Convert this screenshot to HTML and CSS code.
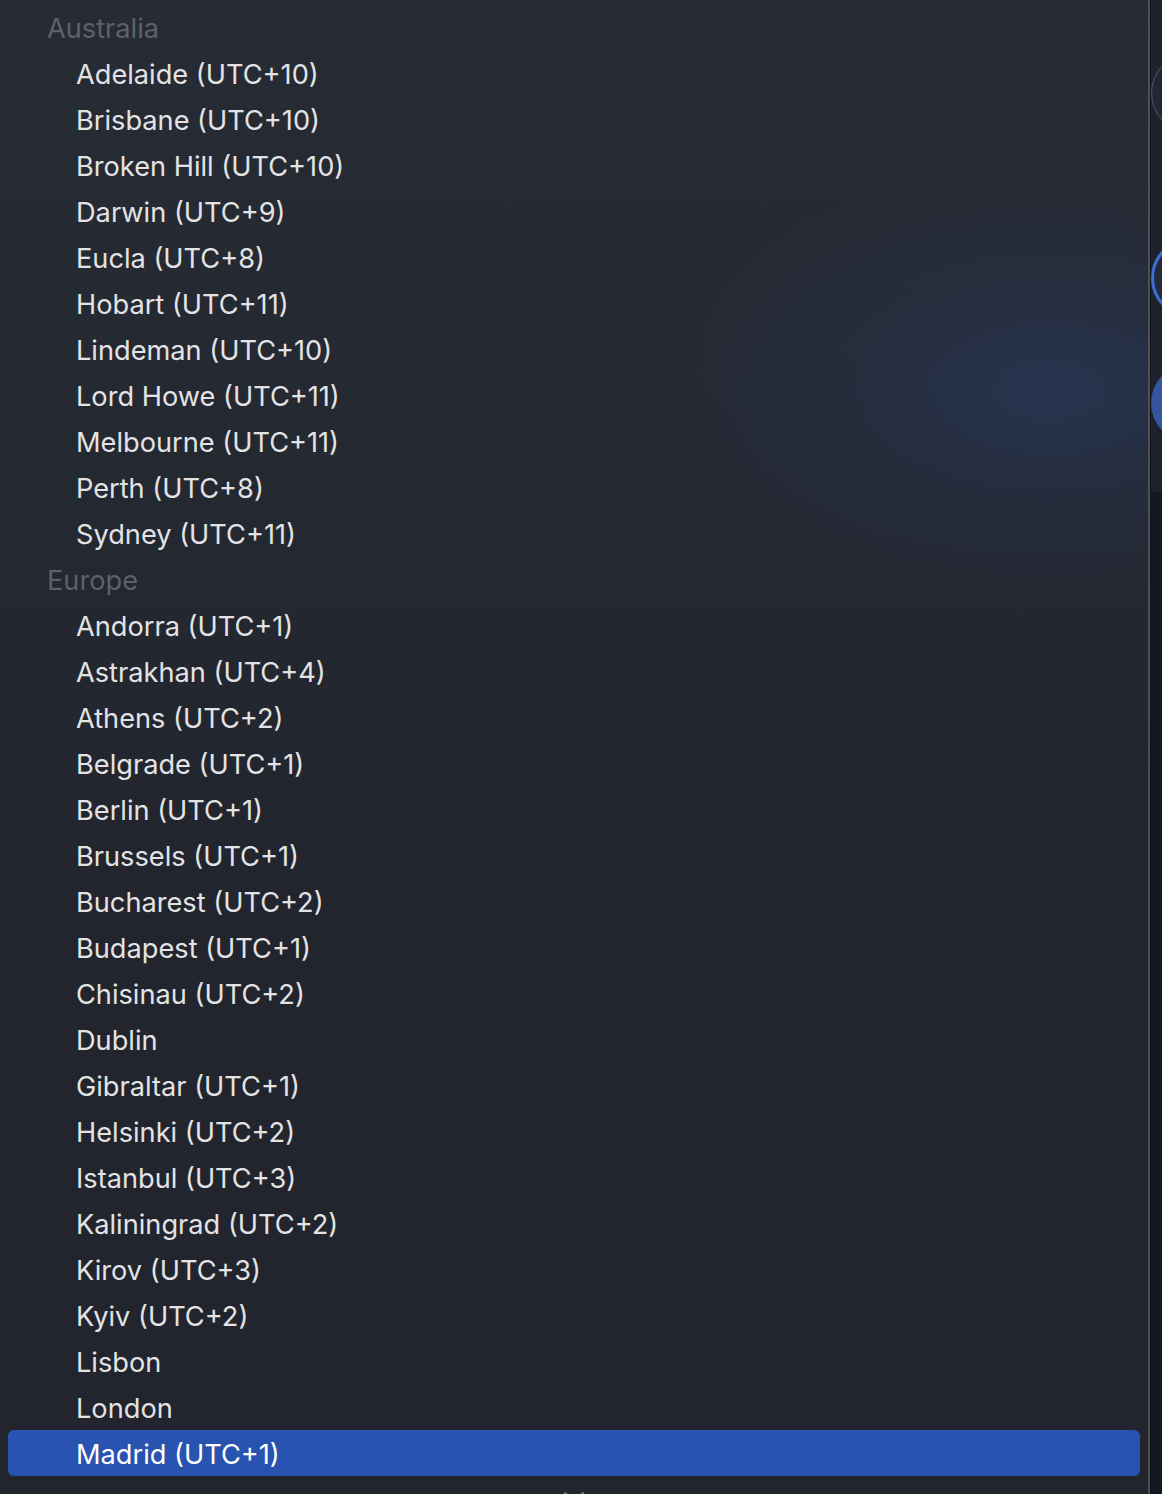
FILE: index.html
```html
<!DOCTYPE html>
<html>
<head>
<meta charset="utf-8">
<link rel="stylesheet" href="styles.css">
</head>
<body>
<div class="screen">
  <div class="menu">
    <ul class="list">
      <li class="group">Australia</li>
      <li class="item">Adelaide (UTC+10)</li>
      <li class="item">Brisbane (UTC+10)</li>
      <li class="item">Broken Hill (UTC+10)</li>
      <li class="item">Darwin (UTC+9)</li>
      <li class="item">Eucla (UTC+8)</li>
      <li class="item">Hobart (UTC+11)</li>
      <li class="item">Lindeman (UTC+10)</li>
      <li class="item">Lord Howe (UTC+11)</li>
      <li class="item">Melbourne (UTC+11)</li>
      <li class="item">Perth (UTC+8)</li>
      <li class="item">Sydney (UTC+11)</li>
      <li class="group">Europe</li>
      <li class="item">Andorra (UTC+1)</li>
      <li class="item">Astrakhan (UTC+4)</li>
      <li class="item">Athens (UTC+2)</li>
      <li class="item">Belgrade (UTC+1)</li>
      <li class="item">Berlin (UTC+1)</li>
      <li class="item">Brussels (UTC+1)</li>
      <li class="item">Bucharest (UTC+2)</li>
      <li class="item">Budapest (UTC+1)</li>
      <li class="item">Chisinau (UTC+2)</li>
      <li class="item">Dublin</li>
      <li class="item">Gibraltar (UTC+1)</li>
      <li class="item">Helsinki (UTC+2)</li>
      <li class="item">Istanbul (UTC+3)</li>
      <li class="item">Kaliningrad (UTC+2)</li>
      <li class="item">Kirov (UTC+3)</li>
      <li class="item">Kyiv (UTC+2)</li>
      <li class="item">Lisbon</li>
      <li class="item">London</li>
      <li class="item selected">Madrid (UTC+1)</li>
    </ul>
    <svg class="scroll-arrow" width="22" height="12" viewBox="0 0 22 12"><path d="M2 2 L11 10 L20 2" fill="none" stroke="#7d8088" stroke-width="2" stroke-linecap="round" stroke-linejoin="round"/></svg>
  </div>
  <div class="edge">
    <span class="ring ring-grey"></span>
    <span class="ring ring-blue"></span>
    <span class="ring ring-fill"></span>
  </div>
</div>
</body>
</html>
```
FILE: styles.css
```css
html, body {
  margin: 0;
  padding: 0;
  width: 1162px;
  height: 1494px;
  overflow: hidden;
  background: #1d212b;
}

.screen {
  display: flex;
  width: 1162px;
  height: 1494px;
}

.menu {
  position: relative;
  width: 1148px;
  height: 1494px;
  flex: none;
  overflow: hidden;
  border-right: 2px solid #4c4f57;
  background:
    radial-gradient(ellipse 400px 220px at 1050px 390px, rgba(40, 54, 84, 0.9) 0%, rgba(38, 50, 76, 0.5) 40%, rgba(35, 40, 52, 0) 100%),
    linear-gradient(180deg, #272b34 0%, #242831 35%, #22252d 60%, #22252d 100%);
  font-family: Inter, "Noto Sans", sans-serif;
}

.list {
  list-style: none;
  margin: 0;
  padding: 4px 8px 0 8px;
}

.list li {
  box-sizing: border-box;
  height: 46px;
  padding-top: 4px;
  line-height: 42px;
  font-size: 27.2px;
  white-space: nowrap;
  border-radius: 6px;
}

.group {
  padding-left: 39px;
  color: #5d616a;
}

.item {
  padding-left: 68px;
  color: #e3e3e5;
}

.item.selected {
  background: #2853b0;
  color: #ffffff;
}

.scroll-arrow {
  position: absolute;
  left: 563px;
  top: 1491px;
}

.edge {
  position: relative;
  flex: 1;
  border-left: 1px solid #111319;
  background: linear-gradient(180deg, #1e222c 0%, #1e222c 492px, #141823 492px, #141823 100%);
  overflow: hidden;
}

.ring {
  position: absolute;
  left: 0;
  width: 80px;
  height: 80px;
  border-radius: 50%;
  box-sizing: border-box;
}

.ring-grey {
  top: 53px;
  border: 1.5px solid #545862;
  background: #222733;
}

.ring-blue {
  top: 238px;
  border: 3px solid #3b70d9;
  background: #232a38;
}

.ring-fill {
  top: 363px;
  background: #34569c;
}
```
